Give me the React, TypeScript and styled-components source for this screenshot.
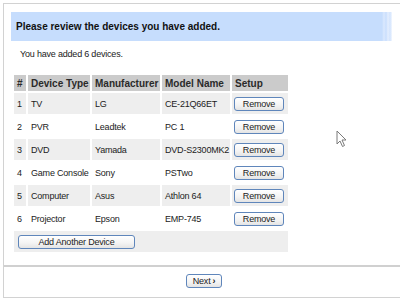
import styled, { createGlobalStyle } from "styled-components";

const GlobalStyle = createGlobalStyle`
	html, body {
		margin: 0;
		padding: 0;
		background: #ffffff;
	}
	body {
		font-family: "Liberation Sans", Arial, sans-serif;
		color: #222222;
	}
`;

const Screen = styled.div`
	position: relative;
	width: 400px;
	height: 302px;
	overflow: hidden;
	background: #ffffff;
`;

const Frame = styled.div`
	margin: 3px 0 0 3px;
	width: 420px;
	height: 293px;
	border: 1px solid #d2d2d2;
	border-right: none;
`;

const Content = styled.div`
	margin-left: 7px;
	width: 386px;
`;

const Banner = styled.div`
	margin-top: 8px;
	width: 381px;
	height: 29px;
	display: flex;
	align-items: center;
	padding-left: 5px;
	box-sizing: border-box;
	font-size: 10px;
	font-weight: bold;
	color: #111111;
	background: linear-gradient(
		to right,
		#c6ddfd 0,
		#c6ddfd 371px,
		#dbe9fe 373px,
		#c9defd 375px,
		#e4eefe 377px,
		#d3e4fd 379px,
		#f2f7ff 381px
	);
`;

const Intro = styled.p`
	margin: 7px 0 0 9px;
	height: 12px;
	line-height: 12px;
	font-size: 9px;
	letter-spacing: -0.2px;
	color: #222222;
`;

const Table = styled.table`
	margin: 13px 0 0 1px;
	border-collapse: separate;
	border-spacing: 2px;
	table-layout: fixed;
	width: 278px;
	font-size: 9px;
	letter-spacing: -0.2px;
`;

const Th = styled.th<{ $w: number }>`
	width: ${(p) => p.$w}px;
	height: 16px;
	padding: 0 0 0 3px;
	box-sizing: border-box;
	background: #cbcbcb;
	color: #2a2a2a;
	font-size: 10px;
	font-weight: bold;
	letter-spacing: 0;
	text-align: left;
	white-space: nowrap;
`;

const Row = styled.tr<{ $shade: boolean }>`
	background: ${(p) => (p.$shade ? "#eeeeee" : "#ffffff")};
`;

const Td = styled.td`
	height: 21px;
	padding: 0 0 0 3px;
	white-space: nowrap;
	overflow: hidden;
	color: #222222;
`;

const SetupCell = styled.td`
	height: 21px;
	padding: 0 0 0 2px;
`;

const Button = styled.button<{ $w: number }>`
	display: flex;
	align-items: center;
	justify-content: center;
	width: ${(p) => p.$w}px;
	height: 14px;
	padding: 0;
	border: 1px solid #5f86bb;
	border-radius: 3px;
	background: linear-gradient(#ffffff, #f3f3f3 60%, #e4e4e4);
	font-family: "Liberation Sans", Arial, sans-serif;
	font-size: 9px;
	letter-spacing: -0.2px;
	color: #222222;
	box-sizing: border-box;
`;

const AddRow = styled.tr`
	background: #eeeeee;
`;

const AddCell = styled.td`
	height: 21px;
	padding: 0 0 0 4px;
`;

const Divider = styled.div`
	margin-top: 11px;
	width: 400px;
	height: 2px;
	background: #d0d0d0;
`;

const Footer = styled.div`
	margin-top: 7px;
	display: flex;
	justify-content: center;
`;

const Chevron = styled.span`
	margin-left: 2px;
	font-weight: bold;
`;

const Cursor = styled.svg`
	position: absolute;
	left: 336px;
	top: 130px;
`;

interface IDevice {
	id: number;
	type: string;
	maker: string;
	model: string;
}

const devices: IDevice[] = [
	{ id: 1, type: "TV", maker: "LG", model: "CE-21Q66ET" },
	{ id: 2, type: "PVR", maker: "Leadtek", model: "PC 1" },
	{ id: 3, type: "DVD", maker: "Yamada", model: "DVD-S2300MK2" },
	{ id: 4, type: "Game Console", maker: "Sony", model: "PSTwo" },
	{ id: 5, type: "Computer", maker: "Asus", model: "Athlon 64" },
	{ id: 6, type: "Projector", maker: "Epson", model: "EMP-745" },
];

function App() {
	return (
		<Screen>
			<GlobalStyle />
			<Frame>
				<Content>
					<Banner>Please review the devices you have added.</Banner>
					<Intro>You have added {devices.length} devices.</Intro>
					<Table>
						<thead>
							<tr>
								<Th $w={12}>#</Th>
								<Th $w={62}>Device Type</Th>
								<Th $w={68}>Manufacturer</Th>
								<Th $w={68}>Model Name</Th>
								<Th $w={56}>Setup</Th>
							</tr>
						</thead>
						<tbody>
							{devices.map((d) => (
								<Row key={d.id} $shade={d.id % 2 === 1}>
									<Td>{d.id}</Td>
									<Td>{d.type}</Td>
									<Td>{d.maker}</Td>
									<Td>{d.model}</Td>
									<SetupCell>
										<Button $w={50}>Remove</Button>
									</SetupCell>
								</Row>
							))}
							<AddRow>
								<AddCell colSpan={5}>
									<Button $w={117}>Add Another Device</Button>
								</AddCell>
							</AddRow>
						</tbody>
					</Table>
				</Content>
				<Divider />
				<Content>
					<Footer>
						<Button $w={36}>
							Next<Chevron>›</Chevron>
						</Button>
					</Footer>
				</Content>
			</Frame>
			<Cursor width="12" height="18" viewBox="0 0 12 18">
				<path
					d="M1 1 L1 14 L4 11 L6.5 16.5 L8.5 15.5 L6 10 L10 10 Z"
					fill="#ffffff"
					stroke="#7a7a7a"
					strokeWidth="1"
					strokeLinejoin="round"
				/>
			</Cursor>
		</Screen>
	);
}

export default App;
